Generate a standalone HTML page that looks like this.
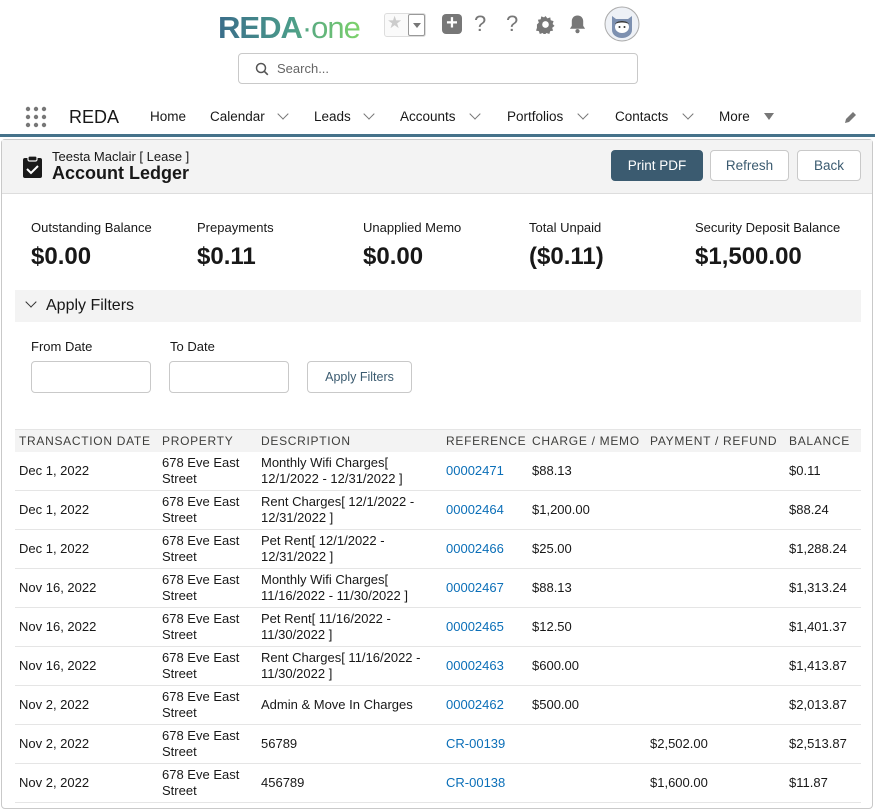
<!DOCTYPE html>
<html><head><meta charset="utf-8">
<style>
*{box-sizing:border-box;margin:0;padding:0}
body{width:875px;height:798px;overflow:hidden;background:#fff;font-family:"Liberation Sans",Arial,sans-serif;color:#181818;position:relative}
.a{position:absolute;white-space:nowrap}
.nav{font-size:13.5px;color:#181818}
.chev{position:absolute;width:8px;height:8px;border-right:1.3px solid #777;border-bottom:1.3px solid #777;transform:rotate(45deg)}
.btn{position:absolute;border:1px solid #c9c9c9;border-radius:4px;background:#fff;font-size:13.5px;color:#3b5b70;text-align:center}
.lbl{font-size:13px;color:#181818}
.val{font-size:24px;font-weight:bold;color:#181818}
table{position:absolute;left:15px;top:429px;width:846px;border-collapse:collapse;font-size:13px}
th{background:#f3f3f3;font-weight:normal;text-align:left;letter-spacing:0.7px;color:#3e3e3c;font-size:12px;height:22px;padding:0 0 0 4px;white-space:nowrap;border-top:1px solid #e5e5e5}
td{height:39px;border-bottom:1px solid #e5e5e5;padding:0 0 0 4px;line-height:16px;vertical-align:middle}
td a{color:#0b6fb8;text-decoration:none}
</style></head><body>
<div class="a" style="left:218px;top:10px;font-size:31px;font-weight:bold;letter-spacing:-1px;background:linear-gradient(90deg,#3a6d8a,#4a9a8a 50%,#7dd36a);-webkit-background-clip:text;color:transparent">REDA<span style="font-weight:normal">·one</span></div>
<div class="a" style="left:384px;top:13px;width:42px;height:24px;border:1px solid #ddd;border-radius:3px;background:#fafafa"></div>
<div class="a" style="left:387px;top:13px;font-size:17px;color:#ccc">★</div>
<div class="a" style="left:408px;top:14px;width:17px;height:22px;border:1px solid #999;border-radius:2px;background:#fff"></div>
<div class="a" style="left:413px;top:23px;border-left:4px solid transparent;border-right:4px solid transparent;border-top:5px solid #777"></div>
<div class="a" style="left:442px;top:14px;width:20px;height:20px;background:#777;border-radius:4px;color:#fff;font-size:20px;line-height:19px;text-align:center;font-weight:bold">+</div>
<div class="a" style="left:474px;top:11px;font-size:22px;color:#777">?</div>
<div class="a" style="left:506px;top:11px;font-size:22px;color:#777">?</div>
<svg class="a" style="left:536px;top:15px" width="19" height="19" viewBox="0 0 20 20"><path d="M10 1l2 2.5 3-1 .5 3 3 1-1 3 2 2-2.5 2 1 3-3 .5-1 3-3-1-2 2-2-2-3 1-1-3-3-.5 1-3L1 10l2-2-1-3 3-.5.5-3 3 1z" fill="#777"/><circle cx="10" cy="10" r="3.5" fill="#fff"/></svg>
<svg class="a" style="left:568px;top:14px" width="19" height="20" viewBox="0 0 20 20"><path d="M10 1c-4 0-6 3-6 6v5l-2 3h16l-2-3V7c0-3-2-6-6-6z" fill="#777"/><circle cx="10" cy="17.5" r="2.2" fill="#777"/></svg>
<svg class="a" style="left:604px;top:6px" width="36" height="36" viewBox="0 0 36 36"><circle cx="18" cy="18" r="17" fill="#eef1f6" stroke="#aaa"/><path d="M8 10l4 3h12l4-3v14c0 5-5 8-10 8s-10-3-10-8z" fill="#7d90b0"/><ellipse cx="18" cy="21" rx="7" ry="6" fill="#fff"/><path d="M11 18c2-4 12-4 14 0c-4-2-10-2-14 0z" fill="#3a3a3a"/><circle cx="15.5" cy="21" r="1" fill="#333"/><circle cx="20.5" cy="21" r="1" fill="#333"/></svg>
<div class="a" style="left:238px;top:53px;width:400px;height:31px;border:1px solid #c9c9c9;border-radius:4px"></div>
<svg class="a" style="left:255px;top:62px" width="14" height="14" viewBox="0 0 14 14"><circle cx="6" cy="6" r="4.5" fill="none" stroke="#555" stroke-width="1.5"/><path d="M9.3 9.3l3.5 3.5" stroke="#555" stroke-width="1.6"/></svg>
<div class="a" style="left:277px;top:61px;font-size:13px;color:#666">Search...</div>
<svg class="a" style="left:25px;top:106px" width="22" height="22"><g fill="#777"><circle cx="3" cy="3" r="2.2"/><circle cx="11" cy="3" r="2.2"/><circle cx="19" cy="3" r="2.2"/><circle cx="3" cy="11" r="2.2"/><circle cx="11" cy="11" r="2.2"/><circle cx="19" cy="11" r="2.2"/><circle cx="3" cy="19" r="2.2"/><circle cx="11" cy="19" r="2.2"/><circle cx="19" cy="19" r="2.2"/></g></svg>
<div class="a" style="left:69px;top:107px;font-size:18px">REDA</div>
<div class="a nav" style="left:150px;top:109px">Home</div>
<div class="a nav" style="left:210px;top:109px">Calendar</div><span class="chev" style="left:279px;top:110px"></span>
<div class="a nav" style="left:314px;top:109px">Leads</div><span class="chev" style="left:365px;top:110px"></span>
<div class="a nav" style="left:400px;top:109px">Accounts</div><span class="chev" style="left:471px;top:110px"></span>
<div class="a nav" style="left:507px;top:109px">Portfolios</div><span class="chev" style="left:579px;top:110px"></span>
<div class="a nav" style="left:615px;top:109px">Contacts</div><span class="chev" style="left:684px;top:110px"></span>
<div class="a nav" style="left:719px;top:109px">More</div>
<div class="a" style="left:764px;top:113px;border-left:5px solid transparent;border-right:5px solid transparent;border-top:7px solid #777"></div>
<svg class="a" style="left:843px;top:110px" width="15" height="15" viewBox="0 0 15 15"><path d="M2 13l1-4 7-7 3 3-7 7z" fill="#777"/></svg>
<div class="a" style="left:0;top:134px;width:875px;height:3px;background:#45728a"></div>
<div class="a" style="left:1px;top:139px;width:872px;height:670px;border:1px solid #c9c9c9;border-radius:4px"></div>
<div class="a" style="left:2px;top:140px;width:870px;height:54px;background:#f3f3f3;border-bottom:1px solid #ddd"></div>
<svg class="a" style="left:22px;top:155px" width="21" height="24" viewBox="0 0 21 24"><rect x="1" y="3" width="19" height="20" rx="2" fill="#1a1a1a"/><rect x="6" y="1" width="9" height="5" rx="1.5" fill="#1a1a1a" stroke="#f3f3f3" stroke-width="1.2"/><path d="M5 14l4 4 7-7" stroke="#fff" stroke-width="2" fill="none"/></svg>
<div class="a" style="left:52px;top:149px;font-size:13px">Teesta Maclair [ Lease ]</div>
<div class="a" style="left:52px;top:163px;font-size:18px;font-weight:bold">Account Ledger</div>
<div class="btn" style="left:611px;top:150px;width:92px;height:31px;line-height:29px;background:#3b5b70;border-color:#3b5b70;color:#fff">Print PDF</div>
<div class="btn" style="left:710px;top:150px;width:79px;height:31px;line-height:29px">Refresh</div>
<div class="btn" style="left:797px;top:150px;width:64px;height:31px;line-height:29px">Back</div>
<div class="a lbl" style="left:31px;top:220px">Outstanding Balance</div><div class="a val" style="left:31px;top:243px">$0.00</div>
<div class="a lbl" style="left:197px;top:220px">Prepayments</div><div class="a val" style="left:197px;top:243px">$0.11</div>
<div class="a lbl" style="left:363px;top:220px">Unapplied Memo</div><div class="a val" style="left:363px;top:243px">$0.00</div>
<div class="a lbl" style="left:529px;top:220px">Total Unpaid</div><div class="a val" style="left:529px;top:243px">($0.11)</div>
<div class="a lbl" style="left:695px;top:220px">Security Deposit Balance</div><div class="a val" style="left:695px;top:243px">$1,500.00</div>
<div class="a" style="left:15px;top:290px;width:846px;height:32px;background:#f3f3f3"></div>
<span class="chev" style="left:27px;top:298px;border-color:#333"></span>
<div class="a" style="left:46px;top:297px;font-size:16px">Apply Filters</div>
<div class="a lbl" style="left:31px;top:339px">From Date</div>
<div class="a lbl" style="left:170px;top:339px">To Date</div>
<div class="a" style="left:31px;top:361px;width:120px;height:32px;border:1px solid #c9c9c9;border-radius:4px"></div>
<div class="a" style="left:169px;top:361px;width:120px;height:32px;border:1px solid #c9c9c9;border-radius:4px"></div>
<div class="btn" style="left:307px;top:361px;width:105px;height:32px;line-height:30px;font-size:12.5px">Apply Filters</div>
<table>
<colgroup><col style="width:143px"><col style="width:99px"><col style="width:185px"><col style="width:86px"><col style="width:118px"><col style="width:139px"><col></colgroup>
<tr><th>TRANSACTION DATE</th><th>PROPERTY</th><th>DESCRIPTION</th><th>REFERENCE</th><th>CHARGE / MEMO</th><th>PAYMENT / REFUND</th><th>BALANCE</th></tr>
<tr><td>Dec 1, 2022</td><td>678 Eve East<br>Street</td><td>Monthly Wifi Charges[<br>12/1/2022 - 12/31/2022 ]</td><td><a>00002471</a></td><td>$88.13</td><td></td><td>$0.11</td></tr>
<tr><td>Dec 1, 2022</td><td>678 Eve East<br>Street</td><td>Rent Charges[ 12/1/2022 -<br>12/31/2022 ]</td><td><a>00002464</a></td><td>$1,200.00</td><td></td><td>$88.24</td></tr>
<tr><td>Dec 1, 2022</td><td>678 Eve East<br>Street</td><td>Pet Rent[ 12/1/2022 -<br>12/31/2022 ]</td><td><a>00002466</a></td><td>$25.00</td><td></td><td>$1,288.24</td></tr>
<tr><td>Nov 16, 2022</td><td>678 Eve East<br>Street</td><td>Monthly Wifi Charges[<br>11/16/2022 - 11/30/2022 ]</td><td><a>00002467</a></td><td>$88.13</td><td></td><td>$1,313.24</td></tr>
<tr><td>Nov 16, 2022</td><td>678 Eve East<br>Street</td><td>Pet Rent[ 11/16/2022 -<br>11/30/2022 ]</td><td><a>00002465</a></td><td>$12.50</td><td></td><td>$1,401.37</td></tr>
<tr><td>Nov 16, 2022</td><td>678 Eve East<br>Street</td><td>Rent Charges[ 11/16/2022 -<br>11/30/2022 ]</td><td><a>00002463</a></td><td>$600.00</td><td></td><td>$1,413.87</td></tr>
<tr><td>Nov 2, 2022</td><td>678 Eve East<br>Street</td><td>Admin &amp; Move In Charges</td><td><a>00002462</a></td><td>$500.00</td><td></td><td>$2,013.87</td></tr>
<tr><td>Nov 2, 2022</td><td>678 Eve East<br>Street</td><td>56789</td><td><a>CR-00139</a></td><td></td><td>$2,502.00</td><td>$2,513.87</td></tr>
<tr><td>Nov 2, 2022</td><td>678 Eve East<br>Street</td><td>456789</td><td><a>CR-00138</a></td><td></td><td>$1,600.00</td><td>$11.87</td></tr>
</table>
</body></html>
